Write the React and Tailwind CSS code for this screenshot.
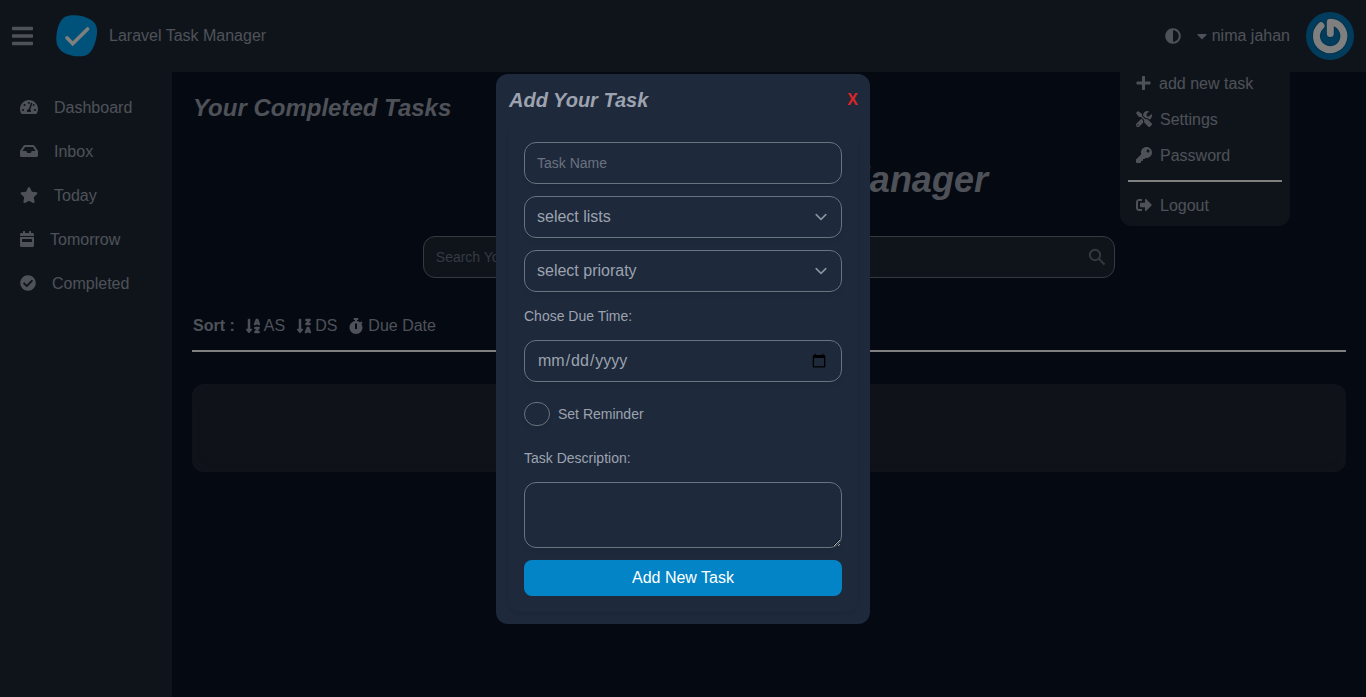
import React from "react";
import {
  FaBars,
  FaTachometerAlt,
  FaInbox,
  FaStar,
  FaCalendarWeek,
  FaCheckCircle,
  FaAdjust,
  FaCaretDown,
  FaTools,
  FaKey,
  FaPlus,
  FaSignOutAlt,
  FaSortAlphaDown,
  FaSortAlphaDownAlt,
  FaStopwatch,
} from "react-icons/fa";

const field =
  "block h-[42px] w-full appearance-none rounded-xl border border-[#6b7280] bg-[#1e293b] px-3 text-[#9ca3af] shadow-[0_3px_5px_-1px_rgb(0_0_0/0.08)] outline-none";

const links = [
  { label: "Dashboard", Icon: FaTachometerAlt, size: "h-4 w-[18px]" },
  { label: "Inbox", Icon: FaInbox, size: "h-4 w-[18px]" },
  { label: "Today", Icon: FaStar, size: "h-4 w-[18px]" },
  { label: "Tomorrow", Icon: FaCalendarWeek, size: "h-4 w-[14px]" },
  { label: "Completed", Icon: FaCheckCircle, size: "h-4 w-4" },
];

const menuItem = "flex h-9 items-center gap-2 px-2";

function Logo() {
  return (
    <svg viewBox="0 0 42 42" className="ml-[23px] h-[42px] w-[42px]">
      <path
        d="M14 .6C20-.3 29 1.2 34.500 4.500C39.500 7.500 41.600 12 41 18C40.300 26 37.500 34.500 33 38.500C29 42 20 42.200 12 39.500C5 37.200.4 32 .3 25C.2 18 2 9 6 4.600C8.200 2 10.500 1 14 .6Z"
        fill="#00a5f5"
      />
      <path
        d="M11 22.800L16.700 28.800L31.600 14"
        fill="none"
        stroke="#fff"
        strokeWidth="3.600"
        strokeLinecap="round"
      />
    </svg>
  );
}

function Avatar() {
  const power = "M15 13.800A13.700 13.700 0 1 0 24.300 10.300V21.500";
  return (
    <svg viewBox="0 0 48 48" className="ml-4 h-12 w-12">
      <circle cx="24" cy="24" r="24" fill="#0479b8" />
      <g fill="none" strokeLinecap="round" strokeLinejoin="round">
        <path d={power} stroke="#056294" strokeWidth="8.600" />
        <path d={power} stroke="#fff" strokeWidth="7" />
      </g>
    </svg>
  );
}

function Header() {
  return (
    <header className="relative flex h-[72px] shrink-0 items-center bg-[#1f2937] px-3">
      <FaBars className="h-6 w-[21px]" />
      <Logo />
      <span className="ml-[11px]">Laravel Task Manager</span>
      <FaAdjust className="ml-auto h-4 w-4" />
      <FaCaretDown className="ml-4 h-4 w-[10px]" />
      <span className="ml-[5px]">nima jahan</span>
      <Avatar />
      <UserMenu />
    </header>
  );
}

function UserMenu() {
  return (
    <div className="absolute top-[65px] right-[76px] z-10 h-[161px] w-[170px] rounded-b-xl bg-[#1f2937] px-2">
      <div className={menuItem}>
        <FaPlus className="h-4 w-[15px]" />
        <span className="pt-0.5">add new task</span>
      </div>
      <div className={menuItem}>
        <FaTools className="h-4 w-4" />
        <span className="pt-0.5">Settings</span>
      </div>
      <div className={menuItem}>
        <FaKey className="h-4 w-4" />
        <span className="pt-0.5">Password</span>
      </div>
      <hr className="mt-[7px] mb-[5px] border-t-2 border-white" />
      <div className={menuItem}>
        <FaSignOutAlt className="h-4 w-4" />
        <span className="pt-0.5">Logout</span>
      </div>
    </div>
  );
}

function Sidebar() {
  return (
    <nav className="w-[172px] shrink-0 bg-[#1f2937] pt-[13px]">
      {links.map(({ label, Icon, size }) => (
        <div key={label} className="flex h-11 items-center gap-4 pl-5">
          <Icon className={size} />
          <span className="pt-0.5">{label}</span>
        </div>
      ))}
    </nav>
  );
}

function Main() {
  return (
    <main className="flex-1 px-5 pt-5">
      <h2 className="pl-px text-2xl leading-8 font-bold italic">Your Completed Tasks</h2>
      <h1 className="mt-9 pl-[63px] text-center text-4xl leading-10 font-bold italic">
        Laravel Task Manager
      </h1>
      <div className="mx-auto mt-9 flex h-[42px] w-[60%] items-center rounded-xl border border-[#6b7280] bg-[#1f2937] px-3">
        <input
          className="min-w-0 flex-1 bg-transparent text-sm outline-none placeholder:text-[#6b7280]"
          placeholder="Search Your Task"
        />
        <svg viewBox="0 0 20 20" className="-mr-1 h-5 w-5 text-[#6b7280]">
          <g fill="none" stroke="currentColor" strokeWidth="1.900">
            <circle cx="9" cy="8" r="5.200" />
            <path d="M12.700 11.700L18.500 17.500" />
          </g>
        </svg>
      </div>
      <div className="mt-9 mb-3 flex items-center pl-px leading-6">
        <b>Sort :</b>
        <FaSortAlphaDown className="ml-[11px] h-4 w-[14px] stroke-current [stroke-width:16]" />
        <span className="ml-1">AS</span>
        <FaSortAlphaDownAlt className="ml-3 h-4 w-[14px] stroke-current [stroke-width:16]" />
        <span className="ml-1">DS</span>
        <FaStopwatch className="ml-3 h-4 w-[14px]" />
        <span className="ml-[5px]">Due Date</span>
      </div>
      <hr className="border-t-2 border-white" />
      <div className="mt-8 h-[88px] rounded-xl bg-[#1f2733] p-2">
        <div className="h-[72px] rounded-xl shadow-md" />
      </div>
    </main>
  );
}

function Select({ label }) {
  return (
    <div className="relative mt-3">
      <select className={field}>
        <option>{label}</option>
      </select>
      <svg
        viewBox="0 0 20 20"
        className="pointer-events-none absolute top-[9px] right-[9px] h-6 w-6 text-[#8b93a0]"
      >
        <path
          d="M6 8l4 4 4-4"
          fill="none"
          stroke="currentColor"
          strokeWidth="1.300"
          strokeLinecap="round"
          strokeLinejoin="round"
        />
      </svg>
    </div>
  );
}

function TaskDialog() {
  return (
    <div className="fixed inset-0 z-20 flex items-center justify-center bg-black/50">
      <section className="h-[550px] w-[374px] rounded-xl bg-[#1e293b] px-3 pt-3 text-[#9ca3af]">
        <div className="flex h-7 items-center justify-between">
          <h3 className="pl-px text-xl font-bold italic">Add Your Task</h3>
          <button className="font-bold text-[#dc2626]">X</button>
        </div>
        <form className="mt-3 h-[486px] rounded-xl px-4 pt-4 shadow-[0_2px_4px_-1px_rgb(0_0_0/0.12)]">
          <input className={field + " text-sm placeholder:text-[#6b7280]"} placeholder="Task Name" />
          <Select label="select lists" />
          <Select label="select prioraty" />
          <label className="mt-3.5 block text-sm">Chose Due Time:</label>
          <input type="date" className={field + " mt-3.5"} />
          <label className="mt-5 flex h-6 items-center gap-2 text-sm">
            <input
              type="checkbox"
              className="h-6 w-[26px] appearance-none rounded-full border border-[#6b7280] shadow-[0_3px_5px_-1px_rgb(0_0_0/0.08)]"
            />
            Set Reminder
          </label>
          <label className="mt-[22px] block text-sm">Task Description:</label>
          <textarea className="mt-3.5 block h-[66px] w-full rounded-xl border border-[#6b7280] bg-[#1e293b] px-3 shadow-[0_3px_5px_-1px_rgb(0_0_0/0.08)] outline-none" />
          <button className="mt-3 h-9 w-full rounded-lg bg-[#0284c7] text-white">
            Add New Task
          </button>
        </form>
      </section>
    </div>
  );
}

export default function App() {
  return (
    <div className="flex h-[697px] flex-col overflow-hidden bg-[#0b1224] font-['Liberation_Sans',Arial,sans-serif] text-base text-[#9ca3af]">
      <Header />
      <div className="flex flex-1">
        <Sidebar />
        <Main />
      </div>
      <TaskDialog />
    </div>
  );
}
